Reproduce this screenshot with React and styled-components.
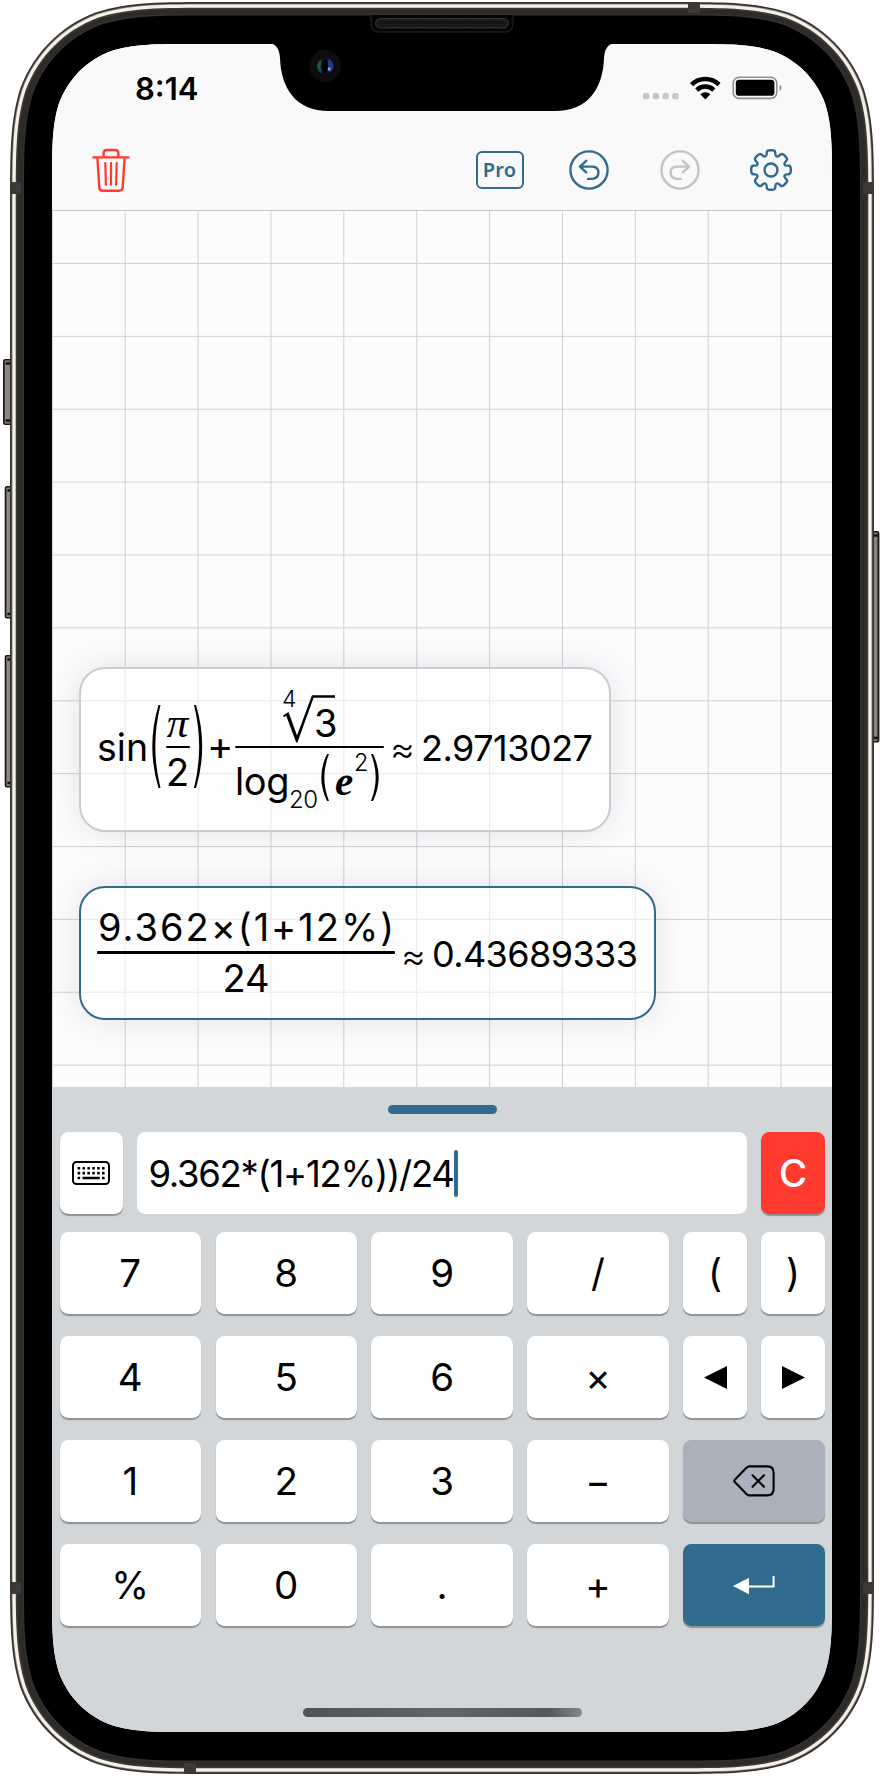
import React from "react";
import styled, { createGlobalStyle } from "styled-components";

const BLUE = "#316b8d";
const RED = "#ff3b30";
const SANS = '"Inter", "Liberation Sans", sans-serif';

const GlobalStyle = createGlobalStyle`
  * { box-sizing: border-box; }
  body { margin: 0; background: #fff; font-family: ${SANS}; color: #000; }
`;

/* Rounded rectangle with continuous-curvature corners */
const squircle = (x, y, w, h, r) => {
  const X = x + w, Y = y + h;
  const a = 1.528665 * r, b = 1.088493 * r, c = 0.868407 * r;
  const d = 0.631494 * r, e = 0.074911 * r, f = 0.372824 * r, g = 0.16906 * r;
  return [
    `M${x + a} ${y}`, `L${X - a} ${y}`,
    `C${X - b} ${y} ${X - c} ${y} ${X - d} ${y + e}`,
    `C${X - f} ${y + g} ${X - g} ${y + f} ${X - e} ${y + d}`,
    `C${X} ${y + c} ${X} ${y + b} ${X} ${y + a}`, `L${X} ${Y - a}`,
    `C${X} ${Y - b} ${X} ${Y - c} ${X - e} ${Y - d}`,
    `C${X - g} ${Y - f} ${X - f} ${Y - g} ${X - d} ${Y - e}`,
    `C${X - c} ${Y} ${X - b} ${Y} ${X - a} ${Y}`, `L${x + a} ${Y}`,
    `C${x + b} ${Y} ${x + c} ${Y} ${x + d} ${Y - e}`,
    `C${x + f} ${Y - g} ${x + g} ${Y - f} ${x + e} ${Y - d}`,
    `C${x} ${Y - c} ${x} ${Y - b} ${x} ${Y - a}`, `L${x} ${y + a}`,
    `C${x} ${y + b} ${x} ${y + c} ${x + e} ${y + d}`,
    `C${x + g} ${y + f} ${x + f} ${y + g} ${x + d} ${y + e}`,
    `C${x + c} ${y} ${x + b} ${y} ${x + a} ${y}Z`,
  ].join("");
};

const Device = styled.main`
  position: relative;
  width: 884px;
  height: 1776px;
  padding: 44px 52px;
  overflow: hidden;
`;

const FrameArt = styled.svg`
  position: absolute;
  inset: 0;
  width: 884px;
  height: 1776px;
`;

const NotchArt = styled.svg`
  position: absolute;
  left: 260px;
  top: 0;
  width: 364px;
  height: 116px;
`;

const Screen = styled.div`
  position: relative;
  width: 780px;
  height: 1688px;
  display: flex;
  flex-direction: column;
  background: #fcfcfe;
  clip-path: path("${squircle(0, 0, 780, 1688, 94)}");
`;

const Header = styled.header`
  height: 167px;
  flex: none;
  background: #f9f9f9;
  border-bottom: 1px solid #c9c9cb;
`;

const StatusBar = styled.div`
  height: 89px;
  padding: 0 48px 0 83px;
  display: flex;
  justify-content: space-between;
  align-items: center;
`;

const Clock = styled.time`
  font-size: 31px;
  font-weight: 600;
  letter-spacing: 0;
  line-height: 40px;
`;

const StatusIcons = styled.svg`
  width: 142px;
  height: 30px;
`;

const Toolbar = styled.nav`
  height: 74px;
  padding: 0 40.5px 0 37.5px;
  display: flex;
  align-items: center;
  justify-content: space-between;
`;

const ToolGroup = styled.div`
  display: flex;
  align-items: center;
  gap: 49px;
`;

const ToolButton = styled.button`
  padding: 0;
  border: 0;
  background: none;
  width: 42px;
  height: 46px;
  display: grid;
  place-items: center;
  color: ${(p) => p.$color || BLUE};
  svg { display: block; overflow: visible; }
`;

const ProButton = styled(ToolButton)`
  width: 48px;
  margin-right: -5px;
`;

const ProBadge = styled.span`
  width: 48px;
  height: 38px;
  border: 2.4px solid ${BLUE};
  border-radius: 6px;
  font: 600 20px/33px "Noto Sans", ${SANS};
  letter-spacing: 0.2px;
  text-align: center;
`;

const Canvas = styled.section`
  height: 876px;
  flex: none;
  padding: 456px 27px 0;
  display: flex;
  flex-direction: column;
  align-items: flex-start;
  gap: 54px;
  background-color: #fcfcfe;
  background-image:
    linear-gradient(to right, #d1d1d4 1.3px, transparent 1.3px),
    linear-gradient(to bottom, #d1d1d4 1.3px, transparent 1.3px);
  background-size: 72.88px 72.88px;
  background-position: 72.7px 52px;
`;

const Card = styled.article`
  width: ${(p) => p.$w}px;
  height: ${(p) => p.$h}px;
  padding: 0 0 0 16px;
  display: flex;
  align-items: flex-start;
  border: 2px solid ${(p) => (p.$active ? BLUE : "#cbcbd0")};
  border-radius: 26px;
  background: rgba(255, 255, 255, 0.52);
  box-shadow: 0 0 36px rgba(0, 0, 30, 0.1);
  white-space: pre;
`;

const Term = styled.span`
  flex: none;
  width: ${(p) => (p.$w ? `${p.$w}px` : "auto")};
  margin-top: ${(p) => p.$top || 0}px;
  margin-left: ${(p) => p.$left || 0}px;
  font-size: ${(p) => p.$size || 36}px;
  font-weight: ${(p) => (p.$light ? 300 : 400)};
  line-height: 40px;
  letter-spacing: ${(p) => p.$track || 0}px;
`;

const SerifTerm = styled(Term)`
  font-family: "Liberation Serif", serif;
  font-style: italic;
  font-weight: ${(p) => (p.$bold ? 700 : 400)};
`;

const Fraction = styled.span`
  flex: none;
  width: ${(p) => p.$w}px;
  margin: ${(p) => p.$m || 0};
  display: flex;
  flex-direction: column;
  align-items: stretch;
`;

const Part = styled.span`
  height: ${(p) => p.$h}px;
  display: flex;
  justify-content: ${(p) => p.$align || "center"};
  align-items: flex-start;
  padding-left: ${(p) => p.$indent || 0}px;
`;

const Bar = styled.span`
  height: 2.6px;
  border-radius: 1px;
  background: #000;
`;

const Paren = styled.svg`
  flex: none;
  margin: ${(p) => p.$m || 0};
  overflow: visible;
  fill: #000;
`;

const Keyboard = styled.section`
  flex: 1;
  display: flex;
  flex-direction: column;
  align-items: center;
  padding: 18px 7.2px 15px 7.6px;
  background: #d3d6d9;
`;

const Handle = styled.div`
  flex: none;
  width: 109px;
  height: 9px;
  border-radius: 5px;
  background: ${BLUE};
`;

const EntryRow = styled.div`
  width: 100%;
  height: 82px;
  margin: 18px 0;
  display: flex;
  gap: 14.4px;
`;

const Keys = styled.div`
  width: 100%;
  display: grid;
  grid-template-columns: repeat(4, 141.3px) 63.4px 63.4px;
  grid-auto-rows: 82px;
  gap: 22px 14.65px;
`;

const tones = {
  plain: ["#fff", "#000"],
  clear: [RED, "#fff"],
  erase: ["#aab0bc", "#000"],
  enter: [BLUE, "#fff"],
};

const Key = styled.button`
  width: ${(p) => (p.$narrow ? "63.4px" : "auto")};
  grid-column: span ${(p) => p.$span || 1};
  padding: 0;
  border: 0;
  border-radius: 8.5px;
  display: grid;
  place-items: center;
  background: ${(p) => tones[p.$tone || "plain"][0]};
  color: ${(p) => tones[p.$tone || "plain"][1]};
  font: ${(p) => (p.$tone === "clear" ? 500 : 400)} 38.5px/1 ${SANS};
  box-shadow: 0 1.6px 1px rgba(60, 62, 66, 0.45);
  svg { display: block; }
`;

const Entry = styled.div`
  flex: 1;
  padding: 1px 0 0 11px;
  display: flex;
  align-items: center;
  border-radius: 8.5px;
  background: #fff;
  font-size: 36.5px;
  letter-spacing: -1.3px;
  font-feature-settings: "calt" 0;
`;

const Caret = styled.span`
  width: 4px;
  height: 47px;
  border-radius: 2px;
  background: ${BLUE};
`;

const HomeBar = styled.div`
  width: 279px;
  height: 9px;
  margin-top: auto;
  border-radius: 5px;
  background: linear-gradient(to right, #505355, #626466 50%, #55585a 88%, #85888a);
`;

const StatusGlyphs = () => (
  <StatusIcons viewBox="0 0 142 30">
    {[0, 1, 2, 3].map((i) => (
      <rect key={i} x={1 + i * 9.75} y="19" width="6.3" height="6.3" rx="1.8" fill="#c7c7c9" />
    ))}
    <g fill="none" stroke="#000" strokeWidth="4.6">
      <path d="M49.6 10.6a19.5 19.5 0 0 1 27.4 0" />
      <path d="M54.8 16.1a12 12 0 0 1 17 0" />
    </g>
    <path d="M58.3 20.2a7.3 7.3 0 0 1 10 0L63.3 25.4Z" />
    <rect x="91.2" y="3.2" width="43.6" height="21.2" rx="6" fill="none" stroke="#8e8e90" strokeWidth="1.6" />
    <rect x="93.8" y="5.8" width="38.6" height="16" rx="3.4" />
    <path d="M137.6 10.8c2.5 1 2.5 5.2 0 6.2Z" fill="#8e8e90" />
  </StatusIcons>
);

const Trash = () => (
  <svg width="38" height="44" viewBox="0 0 38 44" fill="none" stroke="currentColor" strokeWidth="2.4" strokeLinecap="round">
    <path d="M1.5 9.4H36.5M11.6 8.8V5.2q0-3.2 3.2-3.2h8.4q3.2 0 3.2 3.2v3.6M5.4 10l1.9 29.3q.2 3.5 3.7 3.5h16q3.5 0 3.7-3.5L32.6 10" />
    <path d="M13.3 15.2l.6 21.6M19 15.2v21.6M24.7 15.2l-.6 21.6" strokeWidth="2.2" />
  </svg>
);

const Undo = ({ flip }) => (
  <svg width="40" height="40" viewBox="0 0 40 40" fill="none" stroke="currentColor" strokeWidth="2.4" strokeLinecap="round" strokeLinejoin="round">
    <g transform={flip ? "translate(40 0) scale(-1 1)" : undefined}>
      <circle cx="20" cy="20" r="18.6" />
      <path d="M17.2 10.8l-6.3 5.8 6.3 5.8M11.4 16.6h12q6 .3 6 6t-6 6.3h-4.3" />
    </g>
  </svg>
);

const gearPath = (() => {
  const pts = [];
  for (let i = 0; i < 8; i++) {
    const mid = (i * Math.PI) / 4 - Math.PI / 2;
    [[-0.31, 14.8], [-0.2, 20.2], [0.2, 20.2], [0.31, 14.8]].forEach(([da, r]) =>
      pts.push([21 + r * Math.cos(mid + da), 21 + r * Math.sin(mid + da)])
    );
  }
  const n = pts.length;
  return (
    pts
      .map(([x, y], i) => {
        const [px, py] = pts[(i + n - 1) % n];
        const [nx, ny] = pts[(i + 1) % n];
        const k = 0.36;
        return `${i ? "L" : "M"}${x + (px - x) * k} ${y + (py - y) * k}Q${x} ${y} ${x + (nx - x) * k} ${y + (ny - y) * k}`;
      })
      .join("") + "Z"
  );
})();

const Gear = () => (
  <svg width="42" height="42" viewBox="0 0 42 42" fill="none" stroke="currentColor" strokeWidth="2.4">
    <path d={gearPath} />
    <circle cx="21" cy="21" r="6.5" />
  </svg>
);

const KeyboardIcon = () => (
  <svg width="38" height="24" viewBox="0 0 38 24">
    <rect x="1" y="1" width="36" height="22" rx="3.5" fill="none" stroke="#000" strokeWidth="2" />
    {[6, 10.8].map((y) =>
      [0, 1, 2, 3, 4, 5].map((i) => (
        <rect key={`${y}-${i}`} x={5.6 + i * 4.88} y={y} width="2.6" height="2.6" rx=".3" />
      ))
    )}
    <rect x="5.6" y="15.7" width="2.6" height="2.6" rx=".3" />
    <rect x="10.5" y="15.7" width="17.3" height="2.6" rx=".3" />
    <rect x="30" y="15.7" width="2.6" height="2.6" rx=".3" />
  </svg>
);

const Backspace = () => (
  <svg width="42" height="32" viewBox="0 0 42 32" fill="none" stroke="#000" strokeWidth="2.1" strokeLinecap="round" strokeLinejoin="round">
    <path d="M16.5 1.4h17.7q6.4 0 6.4 6.4v16.2q0 6.4-6.4 6.4H16.5q-1.6 0-2.8-1.2L1.8 17q-1.1-1.1 0-2.2L13.7 2.6q1.2-1.2 2.8-1.2Z" />
    <path d="M19.5 10.3l11.5 11.5M31 10.3L19.5 21.8" />
  </svg>
);

const Return = () => (
  <svg width="42" height="20" viewBox="0 0 42 20" fill="none" stroke="#fff" strokeWidth="2">
    <path d="M16 11.5h24.6V1" />
    <path d="M0 11L16 2.8v16.4Z" fill="#fff" stroke="none" />
  </svg>
);

const Arrow = ({ right }) => (
  <svg width="23" height="23" viewBox="0 0 23 23">
    <path d={right ? "M0 0L23 11.5 0 23Z" : "M23 0L0 11.5 23 23Z"} />
  </svg>
);

const TallParen = ({ h, w, m, flip }) => (
  <Paren width={w} height={h} viewBox={`0 0 ${w} ${h}`} $m={m}>
    <path
      transform={flip ? `translate(${w} 0) scale(-1 1)` : undefined}
      d={`M${w - 2} 0Q${-w + 2.6} ${h / 2} ${w - 2} ${h}H${w}Q${-w + 6.6} ${h / 2} ${w} 0Z`}
    />
  </Paren>
);

const RootSign = () => (
  <Paren width="54" height="50" viewBox="0 0 54 50" $m="24.5px 0 0 -1px">
    <path d="M1 21.5L6.5 18 15 41.5 30 1.2H53V3.8H31.6L15.4 48.5H14.2L4.2 21.8 1.6 23.2Z" />
  </Paren>
);

const SideButton = ({ x, y, w, h }) => (
  <g>
    <rect x={x} y={y} width={w} height={h} rx="1.5" fill="url(#btn)" stroke="#181714" strokeWidth="1.4" />
    <rect x={x + 2} y={y + 2.5} width={w - 3} height="2.5" fill="#12110e" />
    <rect x={x + 2} y={y + h - 5} width={w - 3} height="2.5" fill="#12110e" />
  </g>
);

const DeviceFrame = () => (
  <FrameArt viewBox="0 0 884 1776">
    <defs>
      <linearGradient id="btn" x1="0" x2="1">
        <stop offset="0" stopColor="#2b2a26" />
        <stop offset=".22" stopColor="#8d8b86" />
        <stop offset=".7" stopColor="#85837e" />
        <stop offset="1" stopColor="#1b1a17" />
      </linearGradient>
    </defs>
    <SideButton x={3.7} y={359.7} w={9} h={64.6} />
    <SideButton x={5.4} y={486.7} w={8} h={131} />
    <SideButton x={5.4} y={655.7} w={8} h={131} />
    <SideButton x={871} y={531.7} w={7.7} h={210} />
    <path d={squircle(10, 2, 864, 1772, 137)} fill="#33322e" />
    <path d={squircle(11.7, 3.7, 860.6, 1768.6, 135.3)} fill="#8b8882" />
    <path d={squircle(12.5, 4.5, 859, 1767, 134.5)} fill="#f6f0e9" />
    <path d={squircle(15.7, 7.7, 852.6, 1760.6, 131.3)} fill="#3b3934" />
    <path d={squircle(17.5, 9.5, 849, 1757, 129.5)} fill="#2c2b27" />
    <path d={squircle(22.8, 13.8, 838.4, 1748.4, 124)} fill="#323232" />
    <path d={squircle(24, 15.4, 836, 1745.2, 122.8)} fill="#000" />
    <g fill="#3e3936">
      <rect x="688" y="3" width="12" height="10" />
      <rect x="184" y="1763" width="12" height="10" />
      <rect x="11" y="182" width="10" height="12" />
      <rect x="863" y="182" width="10" height="12" />
      <rect x="11" y="1582" width="10" height="12" />
      <rect x="863" y="1582" width="10" height="12" />
    </g>
    <path d="M371 15v9q0 8 8 8h126q8 0 8-8v-9" fill="#050505" stroke="#262626" strokeWidth="1" />
    <rect x="375.5" y="18.5" width="133" height="9.5" rx="4.7" fill="#1c1c1c" stroke="#343434" strokeWidth="1" />
    <path d="M380 21.5h124M378.5 23.5h127M380 25.5h124" stroke="#050505" strokeWidth="1" strokeDasharray="1.5 1.5" />
  </FrameArt>
);

const Notch = () => (
  <NotchArt viewBox="260 0 364 116">
    <path d="M262 43.5h8.5q8.5 1 9.5 14.5C281 88 295.5 111 329 111H555C588.5 111 603 88 604 58q1-13.5 9.5-14.5H622V36H262Z" />
    <circle cx="325" cy="66" r="16" fill="#0d0d0e" />
    <circle cx="325" cy="66" r="8" fill="#10151d" />
    <path d="M321 60a7.5 7.5 0 0 0 0 12.5q-2-6 0-12.5Z" fill="#1f544e" stroke="#1f544e" strokeWidth="1" />
    <path d="M329 59.5a7.5 7.5 0 0 1 1 12.5q-3-6-1-12.5Z" fill="#213c8c" stroke="#213c8c" strokeWidth="1" />
    <circle cx="329" cy="69" r="1.7" fill="#a58cd0" />
    <ellipse cx="325" cy="66" rx="3" ry="7" fill="#020203" />
  </NotchArt>
);

const keypad = [
  "7", "8", "9", "/", "(", ")",
  "4", "5", "6", "×", "left", "right",
  "1", "2", "3", "−", "erase",
  "%", "0", ".", "+", "enter",
];

const PadKey = ({ k }) => {
  if (k === "left") return <Key><Arrow /></Key>;
  if (k === "right") return <Key><Arrow right /></Key>;
  if (k === "erase") return <Key $span={2} $tone="erase"><Backspace /></Key>;
  if (k === "enter") return <Key $span={2} $tone="enter"><Return /></Key>;
  return <Key>{k}</Key>;
};

export default function App() {
  return (
    <>
      <GlobalStyle />
      <Device>
        <DeviceFrame />
        <Screen>
          <Header>
            <StatusBar>
              <Clock>8:14</Clock>
              <StatusGlyphs />
            </StatusBar>
            <Toolbar>
              <ToolButton $color={RED}><Trash /></ToolButton>
              <ToolGroup>
                <ProButton><ProBadge>Pro</ProBadge></ProButton>
                <ToolButton><Undo /></ToolButton>
                <ToolButton $color="#c3c3c5"><Undo flip /></ToolButton>
                <ToolButton><Gear /></ToolButton>
              </ToolGroup>
            </Toolbar>
          </Header>
          <Canvas>
            <Card $w={532} $h={165}>
              <Term $w={54} $top={59} $size={37.5}>sin</Term>
              <TallParen h={83} w={8.5} m="36px 5px 0 1px" />
              <Fraction $w={24} $m="35.5px 4px 0 0">
                <Part $h={41}><SerifTerm $size={43} $top={-1.5}>π</SerifTerm></Part>
                <Bar />
                <Part $h={42}><Term $top={4} $size={38}>2</Term></Part>
              </Fraction>
              <TallParen h={83} w={8.5} m="36px 5px 0 0" flip />
              <Term $w={28} $top={57} $size={40}>+</Term>
              <Fraction $w={149}>
                <Part $h={76.5} $align="flex-start" $indent={47}>
                  <Term $w={1} $top={10} $size={23} $light>4</Term>
                  <RootSign />
                  <Term $top={33.5} $left={-22} $size={38}>3</Term>
                </Part>
                <Bar />
                <Part $h={80} $align="flex-start">
                  <Term $w={54} $top={13} $size={38} $track={-0.4}>log</Term>
                  <Term $w={32} $top={31.5} $size={24} $track={-0.5} $light>20</Term>
                  <TallParen h={47} w={8} m="6px 6px 0 0" />
                  <SerifTerm $bold $w={19} $top={12.5} $size={41}>e</SerifTerm>
                  <Term $w={17} $top={-5} $size={23.5} $light>2</Term>
                  <TallParen h={47} w={8} m="6px 0 0 0" flip />
                </Part>
              </Fraction>
              <Term $w={31} $left={6} $top={59} $size={38} $light>≈</Term>
              <Term $top={58.5} $track={-0.5}>2.9713027</Term>
            </Card>
            <Card $active $w={577} $h={134}>
              <Fraction $w={298}>
                <Part $h={63.3}><Term $top={18.5} $left={2} $size={38} $track={2}>9.362×(1+12%)</Term></Part>
                <Bar />
                <Part $h={60}><Term $top={4} $size={38}>24</Term></Part>
              </Fraction>
              <Term $w={31} $left={6} $top={46.5} $size={38} $light>≈</Term>
              <Term $top={46} $track={-0.6}>0.43689333</Term>
            </Card>
          </Canvas>
          <Keyboard>
            <Handle />
            <EntryRow>
              <Key $narrow><KeyboardIcon /></Key>
              <Entry>9.362*(1+12%))/24<Caret /></Entry>
              <Key $narrow $tone="clear">C</Key>
            </EntryRow>
            <Keys>
              {keypad.map((k) => <PadKey key={k} k={k} />)}
            </Keys>
            <HomeBar />
          </Keyboard>
        </Screen>
        <Notch />
      </Device>
    </>
  );
}
